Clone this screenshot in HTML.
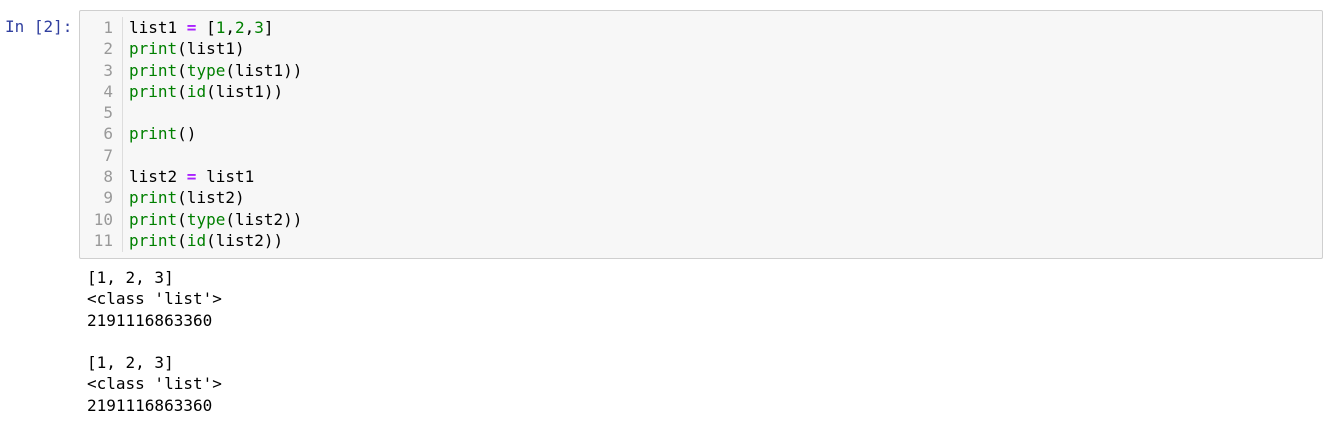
<!DOCTYPE html>
<html><head><style>
body{margin:0;background:#fff;width:1344px;height:421px;overflow:hidden;font-family:"DejaVu Sans Mono","Liberation Mono",monospace;font-size:16px;}
.p{position:absolute;left:5px;top:16px;color:#303F9F;line-height:21.3px;}
.box{position:absolute;left:79px;top:10px;width:1242px;height:247px;background:#f7f7f7;border:1px solid #cfcfcf;border-radius:2px;}
.g{position:absolute;left:0;top:6px;width:42px;border-right:1px solid #ddd;height:235px;color:#999;text-align:right;line-height:21.3px;}
.g div{padding-right:9px}
.c{position:absolute;left:49px;top:6px;line-height:21.3px;color:#000;white-space:pre;}
.f{color:#008000}.o{color:#AA22FF;font-weight:bold}.n{color:#008000}
.out{position:absolute;left:87px;top:267px;line-height:21.3px;white-space:pre;color:#000;}
</style></head><body>
<div class="p">In [2]:</div>
<div class="box">
<div class="g"><div>1</div><div>2</div><div>3</div><div>4</div><div>5</div><div>6</div><div>7</div><div>8</div><div>9</div><div>10</div><div>11</div></div>
<div class="c">list1 <span class="o">=</span> [<span class="n">1</span>,<span class="n">2</span>,<span class="n">3</span>]
<span class="f">print</span>(list1)
<span class="f">print</span>(<span class="f">type</span>(list1))
<span class="f">print</span>(<span class="f">id</span>(list1))

<span class="f">print</span>()

list2 <span class="o">=</span> list1
<span class="f">print</span>(list2)
<span class="f">print</span>(<span class="f">type</span>(list2))
<span class="f">print</span>(<span class="f">id</span>(list2))</div>
</div>
<div class="out">[1, 2, 3]
&lt;class 'list'&gt;
2191116863360

[1, 2, 3]
&lt;class 'list'&gt;
2191116863360</div>
</body></html>
